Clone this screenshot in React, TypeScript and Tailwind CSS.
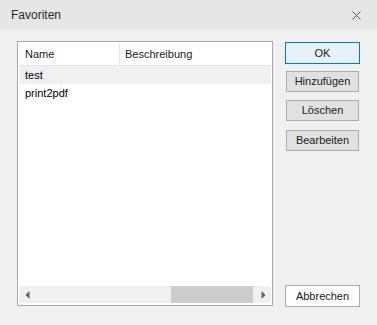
import React from "react";

const font = { fontFamily: '"Liberation Sans", Arial, sans-serif' };

function Btn({ children, className }: { children: React.ReactNode; className: string }) {
  return (
    <div className={"flex items-center justify-center text-[11px] text-[#1a1a1a] " + className}>
      {children}
    </div>
  );
}

export default function App() {
  return (
    <div className="w-[377px] h-[325px] bg-[#f0f0f0] flex flex-col overflow-hidden" style={font}>
      <div className="h-[30px] bg-[#e6e6e6] flex items-center justify-between pl-[11px] pr-[16px]">
        <span className="text-[12px] text-[#2b2b2b]">Favoriten</span>
        <svg width="9" height="9" viewBox="0 0 9 9">
          <path d="M0.5 0.5 L8.5 8.5 M8.5 0.5 L0.5 8.5" stroke="#555" strokeWidth="1" fill="none" />
        </svg>
      </div>
      <div className="flex pt-[11px] pl-[17px]">
        <div className="w-[256px] h-[265px] border border-[#a9a9a9] bg-white p-[1px] flex flex-col">
          <div className="h-[23px] flex items-stretch border-b border-[#e5e5e5] text-[11px] text-[#1a1a1a]">
            <div className="w-[101px] flex items-center pl-[6px] border-r border-[#e5e5e5]">Name</div>
            <div className="flex items-center pl-[5px]">Beschreibung</div>
          </div>
          <div className="flex-1 flex flex-col text-[11px] text-black">
            <div className="h-[18px] bg-[#f0f0f0] flex items-center pl-[6px]">test</div>
            <div className="h-[18px] flex items-center pl-[6px]">print2pdf</div>
          </div>
          <div className="h-[17px] flex bg-[#f0f0f0] mb-[1px]">
            <div className="w-[17px] flex items-center justify-center">
              <svg width="5" height="8" viewBox="0 0 5 8">
                <path d="M4.5 0 L0.5 4 L4.5 8 Z" fill="#606060" />
              </svg>
            </div>
            <div className="flex-1 flex">
              <div className="w-[135px]" />
              <div className="w-[82px] bg-[#cdcdcd]" />
            </div>
            <div className="w-[16px] flex items-center justify-center">
              <svg width="5" height="8" viewBox="0 0 5 8">
                <path d="M0.5 0 L4.5 4 L0.5 8 Z" fill="#606060" />
              </svg>
            </div>
          </div>
        </div>
        <div className="ml-[12px] w-[75px] h-[266px] flex flex-col">
          <Btn className="mt-[1px] h-[22px] w-[75px] bg-[#e5f1fb] border border-[#0078d7]">OK</Btn>
          <Btn className="mt-[7px] ml-[1px] h-[21px] w-[73px] bg-[#e1e1e1] border border-[#adadad]">Hinzufügen</Btn>
          <Btn className="mt-[8px] ml-[1px] h-[21px] w-[73px] bg-[#e1e1e1] border border-[#adadad]">Löschen</Btn>
          <Btn className="mt-[9px] ml-[1px] h-[21px] w-[73px] bg-[#e1e1e1] border border-[#adadad]">Bearbeiten</Btn>
          <div className="flex-1" />
          <Btn className="h-[22px] w-[75px] bg-[#fdfdfd] border border-[#adadad]">Abbrechen</Btn>
        </div>
      </div>
    </div>
  );
}
